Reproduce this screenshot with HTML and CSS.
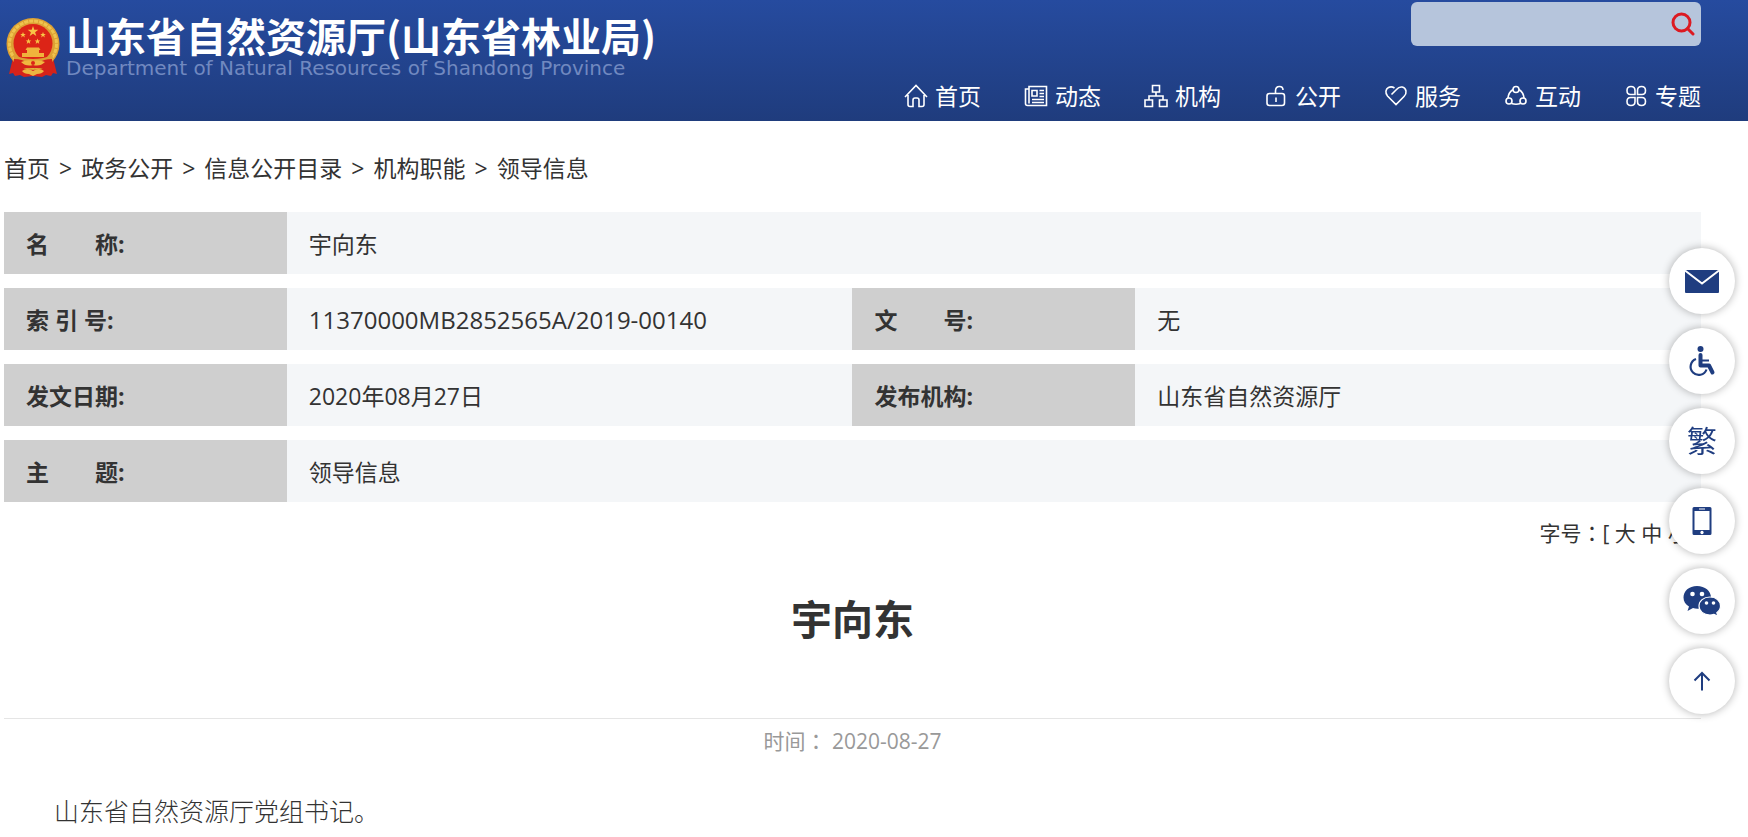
FILE: index.html
```html
<!DOCTYPE html>
<html lang="zh-CN">
<head>
<meta charset="utf-8">
<title>宇向东 - 山东省自然资源厅(山东省林业局)</title>
<link rel="stylesheet" href="styles.css">
</head>
<body>
<header class="site-header">
  <a class="brand" href="#">
    <svg class="emblem" viewBox="0 0 54 60" aria-hidden="true">
      <path d="M7 40L3 56l4-1 2 3 5-1 4 2 9-1 9 1 4-2 5 1 2-3 4 1-4-16z" fill="#d5231a"/>
      <ellipse cx="27" cy="26" rx="26.500" ry="26" fill="#dda034"/>
      <ellipse cx="27" cy="26" rx="23.500" ry="23" fill="none" stroke="#efc44e" stroke-width="3" stroke-dasharray="4 1"/>
      <circle cx="27" cy="25.500" r="19.500" fill="#dc2417"/>
      <path d="M27 8l1.300 3.800h4l-3.200 2.400 1.200 3.900-3.300-2.400-3.300 2.400 1.200-3.900-3.200-2.400h4z" fill="#f8c546"/>
      <path d="M17 14l.8 2h2l-1.600 1.300.6 2.100-1.800-1.300-1.800 1.300.6-2.100-1.600-1.300h2zM37 14l.8 2h2l-1.600 1.300.6 2.100-1.800-1.300-1.800 1.300.6-2.100-1.600-1.300h2zM22.500 20.500l.8 2h2l-1.600 1.300.6 2.100-1.800-1.300-1.800 1.300.6-2.100-1.600-1.300h2zM31.500 20.500l.8 2h2l-1.600 1.300.6 2.100-1.800-1.300-1.800 1.300.6-2.100-1.600-1.300h2z" fill="#f8c546"/>
      <path d="M21 29.500h12l1.500 2.500H33v3h5v4H16v-4h5v-3h-1.500z" fill="#f0b23c"/>
      <path d="M7 37q20 8 40 0l-2 8H9z" fill="#dda034"/>
      <path d="M8 41q9 0 13 4h12q4-4 13-4l1 14-11-5H18L7 55z" fill="#d5231a"/>
      <path d="M15 44q7-3 12-1 5-2 12 1-5 5-12 3-7 2-12-3z" fill="#f0b83f"/>
      <circle cx="27" cy="45" r="2" fill="#dc2417"/>
      <path d="M16 53q5-4 11 0 6-4 11 0-2 3-7 3l-4 2-4-2q-5 0-7-3z" fill="#edb540"/>
    </svg>
    <span class="brand-text">
      <span class="brand-name">山东省自然资源厅(山东省林业局)</span>
      <span class="brand-en" lang="en">Department of Natural Resources of Shandong Province</span>
    </span>
  </a>
  <div class="header-side">
    <form class="search">
      <input class="search-input" type="text" aria-label="搜索">
      <button class="search-button" type="button" aria-label="搜索">
        <svg viewBox="0 0 24 24" width="24" height="24"><circle cx="10.500" cy="10.500" r="8.500"/><path d="M16.500 16.500L22 22"/></svg>
      </button>
    </form>
    <nav class="main-nav">
      <a href="#"><svg viewBox="0 0 24 24"><path d="M1 13L12 1.500 23 13M4 11v9.500q0 2 2 2h3v-6.500q0-2 2-2h2q2 0 2 2v6.500h3q2 0 2-2V11"/></svg>首页</a>
      <a href="#"><svg viewBox="0 0 24 24"><path d="M5 2.500h17.500v19H3.500q-2 0-2-2V5H5zM5 5v14.500M8 6.500h5v5.500H8zM15.500 6.500h4.500M15.500 9.500h4.500M15.500 12.500h4.500M8 15.500h12M8 18.500h12"/></svg>动态</a>
      <a href="#"><svg viewBox="0 0 24 24"><path d="M8.500 1.500h7v6.500h-7zM1 16h7.500v6.500H1zM15.500 16H23v6.500h-7.500zM12 8v4M5 16v-4h14v4"/></svg>机构</a>
      <a href="#"><svg viewBox="0 0 24 24"><rect x="3" y="9.500" width="17.500" height="12" rx="2.500"/><path d="M11.500 9.500V7q0-4.500 4-4.500 3.500 0 3.500 3.500M12 13.500v4.500"/></svg>公开</a>
      <a href="#"><svg viewBox="0 0 24 24"><path d="M7.500 10.500L12.500 5.500C16 1.500 21 2.500 22 7q.5 3-2 5.500L12 20.500 3.500 12C1 9 1.500 5 4.500 3.500q3-1.500 6 .5"/></svg>服务</a>
      <a href="#"><svg viewBox="0 0 24 24"><circle cx="12" cy="5.500" r="3"/><circle cx="5" cy="17" r="3"/><circle cx="19" cy="17" r="3"/><path d="M9 5.500Q4.500 8.500 4 14M15 5.500Q19.500 8.500 20 14M7.500 19.500q4.500 1.500 9 0"/></svg>互动</a>
      <a href="#"><svg viewBox="0 0 24 24"><path d="M11 10.500H6.500q-3.500 0-3.500-4t4-4 4 4zM13.500 10.500V6.500q0-4 4-4t4 4-3.500 4zM11 13.500v4q0 4-4 4t-4-4 3.500-4zM13.500 13.500H18q3.500 0 3.500 4t-4 4-4-4z"/></svg>专题</a>
    </nav>
  </div>
</header>

<main class="content">
  <nav class="breadcrumb" aria-label="当前位置">
    <a href="#">首页</a><span>&gt;</span><a href="#">政务公开</a><span>&gt;</span><a href="#">信息公开目录</a><span>&gt;</span><a href="#">机构职能</a><span>&gt;</span><a href="#">领导信息</a>
  </nav>

  <table class="info">
    <colgroup><col class="col-label"><col class="col-value"><col class="col-label"><col class="col-value"></colgroup>
    <tr><th scope="row">名　　称:</th><td colspan="3">宇向东</td></tr>
    <tr><th scope="row">索 引 号:</th><td class="code">11370000MB2852565A/2019-00140</td><th scope="row">文　　号:</th><td>无</td></tr>
    <tr><th scope="row">发文日期:</th><td>2020年08月27日</td><th scope="row">发布机构:</th><td>山东省自然资源厅</td></tr>
    <tr><th scope="row">主　　题:</th><td colspan="3">领导信息</td></tr>
  </table>

  <div class="font-size">字号<span lang="zh-TW">：</span>[ <a href="#">大</a> <a href="#">中</a> <a href="#">小</a> ]</div>

  <article>
    <h1 class="title">宇向东</h1>
    <p class="date">时间<span lang="zh-TW">：</span> 2020-08-27</p>
    <p class="body-text">山东省自然资源厅党组书记。</p>
  </article>
</main>

<aside class="tools">
  <a href="#" aria-label="邮箱"><svg viewBox="0 0 36 36"><rect x="1" y="7" width="34" height="23" rx="1" fill="currentColor"/><path d="M1 7.500l17 13 17-13" fill="none" stroke="#fff" stroke-width="2"/></svg></a>
  <a href="#" aria-label="无障碍"><svg viewBox="0 0 36 36"><circle cx="16.500" cy="6" r="3" fill="currentColor"/><path d="M16.500 12v10.500H25l3.500 7" fill="none" stroke="currentColor" stroke-width="4" stroke-linejoin="round" stroke-linecap="round"/><path d="M18 17.500h7" stroke="currentColor" stroke-width="2"/><path d="M12 16a8.200 8.200 0 1 0 10.500 10.500" fill="none" stroke="currentColor" stroke-width="2.200"/></svg></a>
  <a href="#">繁</a>
  <a href="#" aria-label="手机版"><svg viewBox="0 0 36 36"><path fill="currentColor" fill-rule="evenodd" d="M10 4h16q1.500 0 1.500 1.500v25q0 1.500-1.500 1.500H10q-1.500 0-1.500-1.500v-25Q8.500 4 10 4zM10.500 8v19h15V8zM15 5.500v1h6v-1zM18 27.800a1.700 1.700 0 1 0 .01 0z"/></svg></a>
  <a href="#" aria-label="微信"><svg class="wide" viewBox="0 0 38 38"><path d="M14 4C6 4 .5 9 .5 15.500c0 4 2 7 5.500 9L4.500 29l5.500-3q2 .7 4.500.7C22 26.700 28 22 28 15.500S22 4 14 4z" fill="currentColor"/><path d="M27 15c-6.500 0-11 4-11 9s4.500 9 11 9q2 0 4-.7l4 2-1.200-3.600c2.300-1.700 3.700-4 3.700-6.700 0-5-4.500-9-10.500-9z" fill="currentColor" stroke="#fff" stroke-width="1.200"/><g fill="#fff"><circle cx="9.500" cy="12" r="2.300"/><circle cx="19" cy="12" r="2.300"/><circle cx="23.500" cy="21" r="1.800"/><circle cx="30.500" cy="21" r="1.800"/></g></svg></a>
  <a href="#" aria-label="返回顶部"><svg viewBox="0 0 36 36"><path d="M18 27.500V10M10.500 17.500L18 10l7.500 7.500" fill="none" stroke="currentColor" stroke-width="2"/></svg></a>
</aside>
</body>
</html>
```
FILE: styles.css
```css
* {
  box-sizing: border-box;
}

body {
  margin: 0;
  background: #fff;
  color: #333;
  font-family: "Open Sans", "Noto Sans CJK SC", sans-serif;
  font-size: 23px;
  line-height: 32px;
}

a {
  color: inherit;
  text-decoration: none;
}

.site-header {
  display: flex;
  justify-content: space-between;
  align-items: flex-start;
  min-height: 121px;
  padding: 2px 47px 0 6px;
  background: linear-gradient(#264b9f, #1f3c7d);
  color: #fff;
}

.brand {
  display: flex;
  align-items: flex-end;
  gap: 6px;
  padding-top: 13px;
}

.emblem {
  width: 54px;
  height: 60px;
}

.brand-text {
  display: flex;
  flex-direction: column;
  gap: 3px;
}

.brand-name {
  font-family: "Noto Sans CJK SC", sans-serif;
  font-size: 40px;
  font-weight: 700;
  line-height: 40px;
}

.brand-en {
  color: #7189c0;
  font-family: "DejaVu Sans", sans-serif;
  font-size: 20px;
  line-height: 20px;
}

.header-side {
  display: flex;
  flex-direction: column;
  align-items: flex-end;
  gap: 34px;
}

.search {
  display: flex;
  align-items: center;
  width: 290px;
  height: 44px;
  padding-right: 6px;
  border-radius: 6px;
  background: #b6c5dc;
}

.search-input {
  flex: 1;
  min-width: 0;
  height: 100%;
  padding: 0 12px;
  border: 0;
  outline: 0;
  background: transparent;
  color: #333;
  font: inherit;
}

.search-button {
  display: flex;
  padding: 0;
  border: 0;
  background: transparent;
  cursor: pointer;
}

.search-button svg {
  fill: none;
  stroke: #dc1a22;
  stroke-width: 3;
  stroke-linecap: round;
}

.main-nav {
  display: flex;
  gap: 43px;
}

.main-nav a {
  display: flex;
  align-items: center;
  gap: 7px;
}

.main-nav svg {
  width: 24px;
  height: 24px;
  fill: none;
  stroke: currentColor;
  stroke-width: 1.6;
}

.content {
  padding: 31px 47px 0 4px;
}

.breadcrumb {
  display: flex;
  gap: 9px;
}

.info {
  width: 100%;
  margin-top: 14px;
  border-collapse: separate;
  border-spacing: 0 14px;
  table-layout: fixed;
}

.col-label {
  width: 16.666%;
}

.col-value {
  width: 33.333%;
}

.info th,
.info td {
  height: 62px;
  padding: 2px 22px 0;
  text-align: left;
}

.info th {
  background: #cfcfcf;
  font-weight: 700;
}

.info td {
  background: #f4f6f8;
}

.info .code {
  font-size: 24px;
}

.font-size,
.date {
  font-size: 21px;
}

.font-size {
  text-align: right;
}

.title {
  margin: 0;
  padding: 40px 0 69px;
  border-bottom: 1px solid #e5e5e5;
  font-size: 41px;
  line-height: 60px;
  text-align: center;
}

.date {
  margin: 0;
  padding: 5px 0;
  color: #999;
  text-align: center;
}

.body-text {
  margin: 33px 0 0;
  font-size: 25px;
  font-weight: 300;
  text-indent: 2em;
}

[lang="zh-TW"] {
  font-family: "Noto Sans CJK TC", sans-serif;
}

.tools {
  position: fixed;
  top: 248px;
  right: 13px;
  display: flex;
  flex-direction: column;
  gap: 14px;
}

.tools a {
  display: flex;
  align-items: center;
  justify-content: center;
  width: 66px;
  height: 66px;
  border-radius: 50%;
  background: #fff;
  box-shadow: 0 0 8px rgba(0, 0, 0, 0.3);
  color: #1f3d80;
  font-size: 30px;
}

.tools svg {
  width: 36px;
  height: 36px;
}

.tools .wide {
  width: 38px;
  height: 38px;
}
```
